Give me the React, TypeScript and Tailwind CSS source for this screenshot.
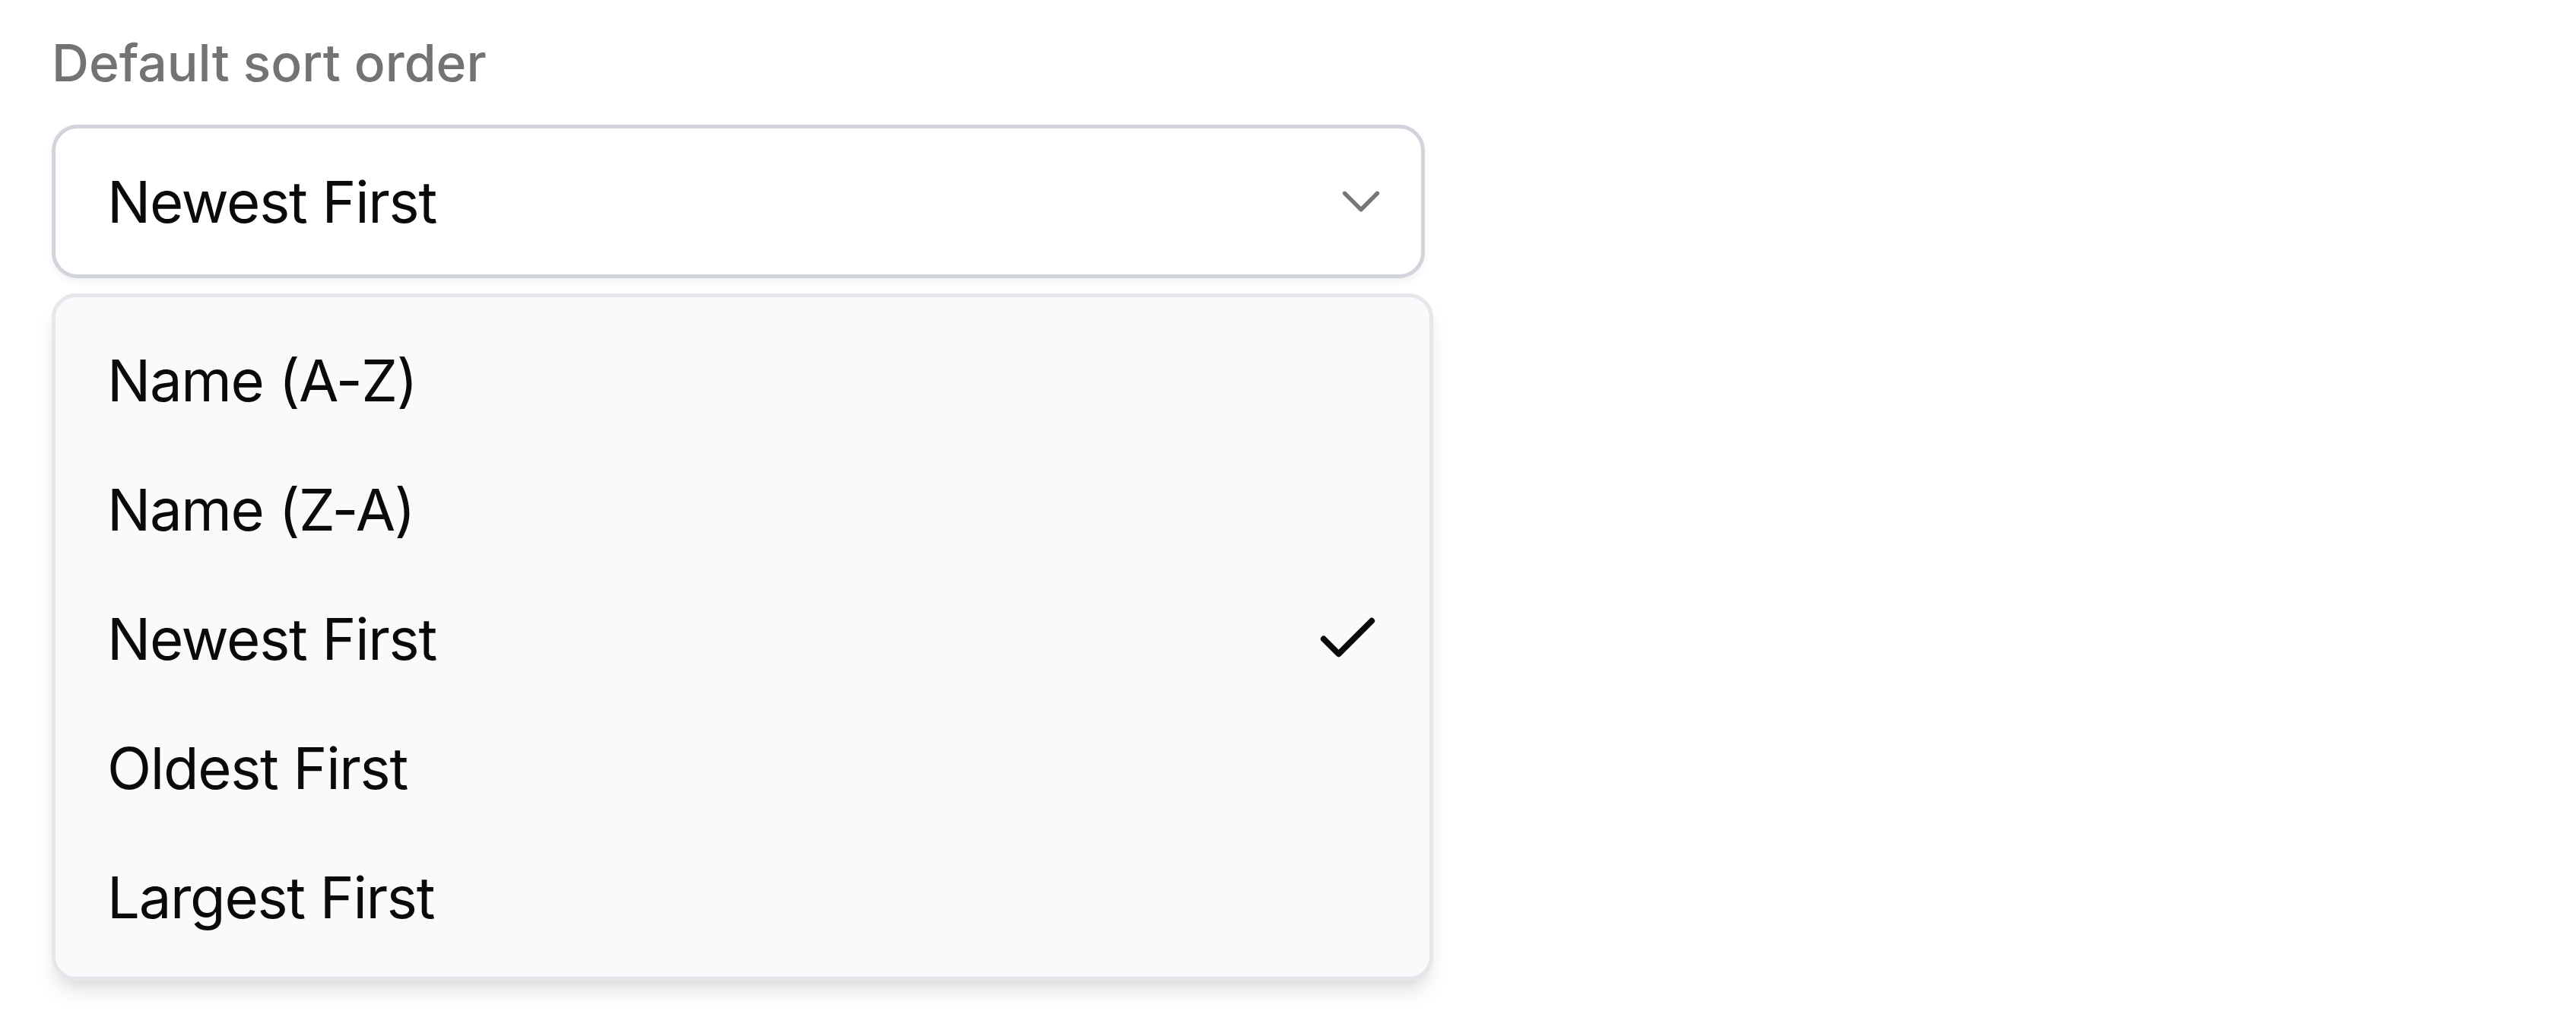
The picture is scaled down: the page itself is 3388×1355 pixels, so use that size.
import React from "react";

const items = ["Name (A-Z)", "Name (Z-A)", "Newest First", "Oldest First", "Largest First"];
const selected = "Newest First";

function ChevronDown() {
  return (
    <svg width="86" height="86" viewBox="0 0 24 24" fill="none" stroke="#777777" strokeWidth="1.5" strokeLinecap="round" strokeLinejoin="round">
      <path d="m6 9 6 6 6-6" />
    </svg>
  );
}

function Check() {
  return (
    <svg width="95" height="95" viewBox="0 0 24 24" fill="none" stroke="#0a0a0a" strokeWidth="2" strokeLinecap="round" strokeLinejoin="round">
      <path d="M20 6 9 17l-5-5" />
    </svg>
  );
}

export default function App() {
  return (
    <div className="w-[3388px] h-[1355px] bg-white pl-[68px] pt-[35px] font-['Inter',sans-serif]">
      <div className="w-[1817px] flex flex-col">
        <label className="block text-[67.8px] leading-[95px] font-medium text-[#737373]">Default sort order</label>
        <div className="mt-[34px] w-[1806px] h-[202px] border-[5px] border-[#d1d5db] rounded-[34px] bg-white shadow-[0_5px_10px_0_rgba(0,0,0,0.05)] flex items-center justify-between pl-[68px] pr-[36px]">
          <span className="text-[76px] leading-none tracking-[-1.3px] text-[#0a0a0a]">Newest First</span>
          <ChevronDown />
        </div>
        <div className="mt-[20px] w-[1817px] border-[5px] border-[#e5e7eb] rounded-[32px] bg-[#f9fafb] pt-[24px] pb-[20px] shadow-[0_19px_28px_-5px_rgba(0,0,0,0.1),0_10px_19px_-10px_rgba(0,0,0,0.1)]">
          {items.map((it) => (
            <div key={it} className="h-[170px] flex items-center justify-between pl-[68px] pr-[60px]">
              <span className="text-[76px] leading-none tracking-[-1.3px] text-[#0a0a0a]">{it}</span>
              {it === selected ? <Check /> : null}
            </div>
          ))}
        </div>
      </div>
    </div>
  );
}
